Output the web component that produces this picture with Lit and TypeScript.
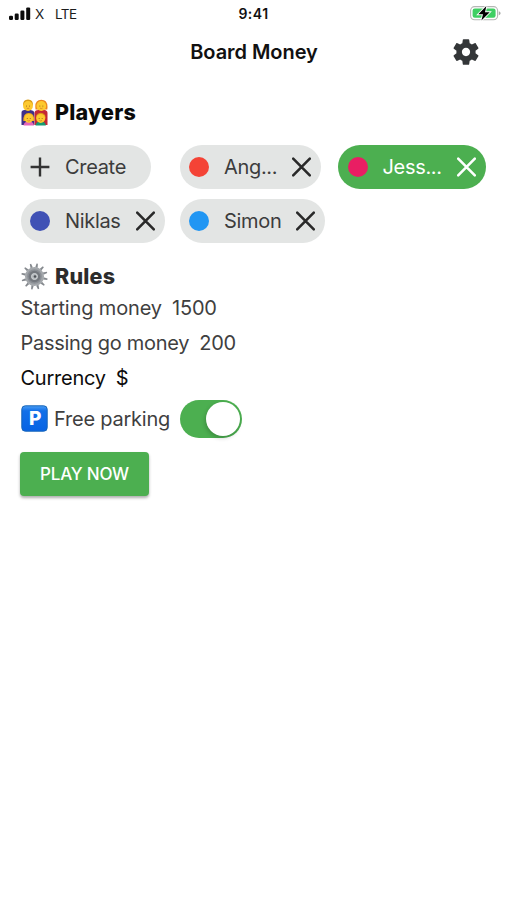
import { LitElement, html, svg, css, nothing } from "lit";
import { customElement } from "lit/decorators.js";
import { classMap } from "lit/directives/class-map.js";

interface Player {
  name: string;
  color: string;
  selected?: boolean;
}

const PLAYERS: Player[] = [
  { name: "Ang...", color: "#f44336" },
  { name: "Jess...", color: "#e91e63", selected: true },
  { name: "Niklas", color: "#3f51b5" },
  { name: "Simon", color: "#2196f3" },
];

@customElement("status-bar")
class StatusBar extends LitElement {
  static styles = css`
    :host {
      display: grid;
      grid-template-columns: 1fr auto 1fr;
      align-items: center;
      height: 28px;
      padding: 0 6px 0 8px;
      box-sizing: border-box;
      font-size: 13.5px;
      color: #1c1c1c;
    }
    svg { display: block; }
    .left { display: flex; align-items: center; }
    .carrier { margin-left: 4px; width: 20px; font-size: 13.5px; }
    .network { letter-spacing: -0.5px; font-size: 13.5px; }
    .time { margin: -1px 2px 0 0; font-size: 14px; font-weight: 600; letter-spacing: 0.5px; color: #111; }
    .battery { justify-self: end; margin-top: -2px; }
  `;
  render() {
    return html`
      <div class="left">
        <svg width="23" height="14" viewBox="0 0 23 14" fill="#0c0c0c">
          <rect x="1" y="8.8" width="4" height="4.2" rx="1.2" />
          <rect x="6.7" y="6.5" width="4" height="6.5" rx="1.2" />
          <rect x="12.4" y="3.6" width="4" height="9.4" rx="1.2" />
          <rect x="18.2" y="0.4" width="4" height="12.6" rx="1.2" />
        </svg>
        <span class="carrier">X</span><span class="network">LTE</span>
      </div>
      <span class="time">9:41</span>
      <svg class="battery" width="32" height="18" viewBox="0 0 32 18">
        <rect x="1.6" y="2.6" width="27" height="13.2" rx="4" fill="#fff" stroke="#b4b7b4" stroke-width="1.1" />
        <rect x="3.6" y="4.6" width="23" height="9.2" rx="2.2" fill="#3fcf63" />
        <path d="M29.8 7.2c1.4.5 1.8 1.2 1.8 2s-.4 1.5-1.8 2z" fill="#a9aca9" />
        <path d="M17.4 2 9.3 10.3H14l-1.6 6.2 8.3-8.3H16z" fill="#000" stroke="#fff" stroke-width="1.8" paint-order="stroke" />
      </svg>
    `;
  }
}

@customElement("player-chip")
class PlayerChip extends LitElement {
  static properties = {
    label: { type: String },
    color: { type: String },
    selected: { type: Boolean },
  };
  declare label: string;
  declare color: string;
  declare selected: boolean;

  static styles = css`
    :host { display: flex; }
    .chip {
      display: flex;
      align-items: center;
      height: 44px;
      padding: 0 10px 0 9.5px;
      box-sizing: border-box;
      border-radius: 22px;
      background: #e3e5e4;
      color: #3c3c3c;
    }
    .create { padding-right: 25px; }
    .selected { background: #4caf50; color: #fff; }
    svg { display: block; flex: none; }
    .label {
      margin-left: 15px;
      font-size: 20px;
      letter-spacing: -0.32px;
      white-space: nowrap;
    }
    .close { margin-left: 15px; }
  `;
  render() {
    const player = Boolean(this.color);
    const lead = player
      ? svg`<circle cx="10" cy="10" r="10" fill=${this.color} />`
      : svg`<path d="M10 .6v18.8M.6 10h18.8" stroke="#333" stroke-width="2.4" />`;
    return html`
      <div class=${classMap({ chip: true, create: !player, selected: this.selected })}>
        <svg width="20" height="20" viewBox="0 0 20 20">${lead}</svg>
        <span class="label">${this.label}</span>
        ${player
          ? html`<svg class="close" width="19" height="20" viewBox="0 0 19 20">
              <path
                d="M1.2 1.7 17.8 18.3M17.8 1.7 1.2 18.3"
                fill="none"
                stroke=${this.selected ? "#fff" : "#292929"}
                stroke-width="2.6"
                stroke-linecap="round"
              />
            </svg>`
          : nothing}
      </div>
    `;
  }
}

const face = (x: number, y: number, r: number) => svg`
  <circle cx=${x} cy=${y} r=${r} fill="#fdc92f" />
  <path d="M${x - 2} ${y + 0.1}h1M${x + 1} ${y + 0.1}h1" stroke="#a06a1e" stroke-width=".9" />
  <path d="M${x - 1.3} ${y + 2.1}q1.3 1 2.6 0" fill="none" stroke="#d0782a" stroke-width=".7" />
`;

const familyIcon = html`
  <svg width="27" height="27" viewBox="0 0 27 27">
    <path d="M.5 26V13.500q0-2.500 3-2.500h6q3.800.5 3.800 3v12z" fill="#3f3089" />
    <path d="M13.500 26V14q0-3 4-3h5.700q3.300.3 3.300 3v12z" fill="#c52735" />
    <path d="M14.600 10.500Q13 1 20.300.8 27.600 1 26.300 10.500z" fill="#ec861f" />
    <path d="M2 6.500Q1.700.7 7 .5q5.300.2 5 6z" fill="#d99c15" />
    ${face(7, 7, 4.9)} ${face(20.3, 7, 4.9)}
    <path d="M2.500 26.500q.5-4 5.300-4t5.200 4z" fill="#e666b9" />
    <path d="M14.500 26.500q.5-4 5.200-4t5.200 4z" fill="#159a70" />
    <path d="M2.300 22Q2 14 7.800 13.900q5.800.1 5.500 8.100z" fill="#f0ac1c" />
    <path d="M15 19q0-5 4.800-5.200 4.800.2 4.800 5.200z" fill="#db9417" />
    ${face(7.8, 19.4, 4.3)} ${face(19.7, 19.4, 4.5)}
  </svg>
`;

const teeth = Array.from(
  { length: 12 },
  (_, i) => svg`<path d="M12.3 4.5 12.8.3h1.4l.5 4.200z" fill="#85898e" transform="rotate(${i * 30 + 12} 13.5 13.5)" />`
);

const gearIcon = html`
  <svg width="27" height="27" viewBox="0 0 27 27">
    ${teeth}
    <circle cx="13.5" cy="13.5" r="8.4" fill="#8b8f95" stroke="#a3a7ab" stroke-width="2.2" />
    <circle cx="13.5" cy="13.5" r="5.8" fill="#74787e" />
    <circle cx="13.5" cy="13.5" r="3" fill="#b4b8bc" stroke="#d0d4d7" stroke-width="1" />
    <circle cx="14" cy="13.5" r="1.3" fill="#4d5156" />
  </svg>
`;

@customElement("app-root")
class AppRoot extends LitElement {
  static styles = css`
    :host {
      display: block;
      height: 900px;
      overflow: hidden;
      background: #fff;
      color: #3f3f3f;
      font-family: Inter, "Liberation Sans", sans-serif;
    }
    svg { display: block; flex: none; }
    header {
      display: grid;
      grid-template-columns: 1fr auto 1fr;
      align-items: center;
      height: 48px;
      padding: 0 25px;
    }
    h1 {
      grid-column: 2;
      margin: 0 0 0 1px;
      font-size: 20px;
      font-weight: 600;
      letter-spacing: -0.05px;
      color: #111;
    }
    .settings { justify-self: end; }
    main { padding: 22px 20.5px 0; }
    h2 {
      display: flex;
      align-items: center;
      gap: 7.5px;
      height: 28px;
      margin: 0;
      font-size: 21.5px;
      font-weight: 800;
      letter-spacing: 0.2px;
      color: #0a0a0a;
    }
    .chips {
      display: grid;
      grid-template-columns: 159px 158.5px auto;
      gap: 10px 0;
      margin: 19px 0;
    }
    .rules { color: #2c2c2c; }
    .row {
      display: flex;
      align-items: center;
      gap: 10px;
      height: 35px;
      font-size: 20px;
      letter-spacing: -0.15px;
      white-space: nowrap;
    }
    .row.passing { letter-spacing: -0.29px; }
    .row.currency { color: #0c0c0c; letter-spacing: -0.25px; }
    .row.parking { height: 47px; letter-spacing: -0.22px; }
    .parking-label { display: flex; align-items: center; gap: 6.5px; }
    .toggle {
      display: flex;
      justify-content: flex-end;
      box-sizing: border-box;
      width: 62px;
      height: 38px;
      padding: 2px;
      border-radius: 19px;
      background: #4caf50;
    }
    .knob {
      width: 34px;
      height: 34px;
      border-radius: 50%;
      background: #fff;
      box-shadow: -1px 2px 4px rgba(0, 0, 0, 0.2);
    }
    .play {
      display: block;
      width: 129px;
      height: 44px;
      margin: 10px 0 0 -0.5px;
      padding: 0;
      border: 0;
      border-radius: 4px;
      background: #4caf50;
      color: #fff;
      font: 500 17px Inter, "Liberation Sans", sans-serif;
      letter-spacing: -0.2px;
      box-shadow: 0 2px 3px rgba(0, 0, 0, 0.32);
    }
  `;

  render() {
    return html`
      <status-bar></status-bar>
      <header>
        <h1>Board Money</h1>
        <svg class="settings" width="32" height="32" viewBox="0 0 24 24" fill="#333638">
          <path
            d="M19.140 12.940c.04-.3.06-.61.06-.94 0-.32-.02-.64-.07-.94l2.030-1.580c.18-.14.23-.41.12-.61l-1.920-3.320c-.12-.22-.37-.29-.59-.22l-2.390.96c-.5-.38-1.030-.7-1.620-.94l-.36-2.540c-.04-.24-.24-.41-.48-.41h-3.840c-.24 0-.43.17-.47.41l-.36 2.540c-.59.24-1.130.57-1.620.94l-2.390-.96c-.22-.08-.47 0-.59.22L2.740 8.870c-.12.21-.08.47.12.61l2.030 1.580c-.05.3-.09.63-.09.94s.02.64.07.94l-2.030 1.580c-.18.14-.23.41-.12.61l1.920 3.320c.12.22.37.29.59.22l2.390-.96c.5.38 1.030.7 1.620.94l.36 2.540c.05.24.24.41.48.41h3.840c.24 0 .44-.17.47-.41l.36-2.540c.59-.24 1.130-.56 1.620-.94l2.390.96c.22.08.47 0 .59-.22l1.920-3.320c.12-.22.07-.47-.12-.61l-2.010-1.580zM12 15.100c-1.710 0-3.100-1.390-3.100-3.100s1.390-3.100 3.100-3.100 3.100 1.390 3.100 3.100-1.390 3.100-3.100 3.100z"
          />
        </svg>
      </header>
      <main>
        <h2>${familyIcon}<span>Players</span></h2>
        <div class="chips">
          <player-chip label="Create"></player-chip>
          ${PLAYERS.map(
            (p) => html`<player-chip .label=${p.name} .color=${p.color} .selected=${Boolean(p.selected)}></player-chip>`
          )}
        </div>
        <h2 class="rules">${gearIcon}<span>Rules</span></h2>
        <div class="row"><span>Starting money</span><span>1500</span></div>
        <div class="row passing"><span>Passing go money</span><span>200</span></div>
        <div class="row currency"><span>Currency</span><span>$</span></div>
        <div class="row parking">
          <span class="parking-label">
            <svg width="27" height="27" viewBox="0 0 27 27">
              <defs>
                <linearGradient id="sign" x1="0" y1="0" x2="0" y2="1">
                  <stop offset="0" stop-color="#4a9df5" />
                  <stop offset=".2" stop-color="#1270e8" />
                  <stop offset="1" stop-color="#0763e4" />
                </linearGradient>
              </defs>
              <rect x=".8" y=".8" width="25.4" height="25.4" rx="3.5" fill="url(#sign)" stroke="#1765b8" />
              <text x="14" y="20" text-anchor="middle" font-size="19" font-weight="800" fill="#fff">P</text>
            </svg>
            <span>Free parking</span>
          </span>
          <span class="toggle"><span class="knob"></span></span>
        </div>
        <button class="play">PLAY NOW</button>
      </main>
    `;
  }
}
